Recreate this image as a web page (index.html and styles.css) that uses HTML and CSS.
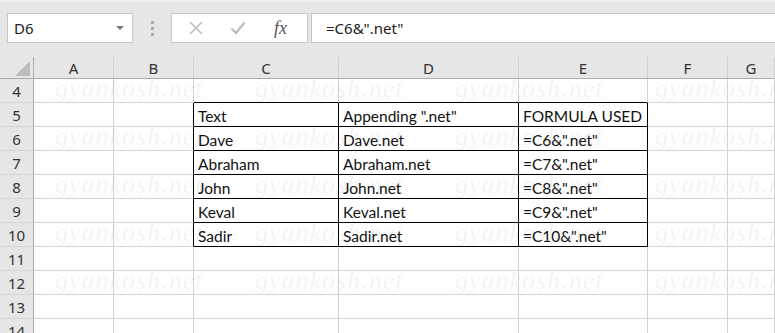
FILE: index.html
```html
<!DOCTYPE html>
<html lang="en">
<head>
  <meta charset="UTF-8">
  <title>Appending text with &amp;</title>
  <link rel="stylesheet" href="styles.css">
</head>
<body>
  <div class="bar">
    <div class="namebox">
      <span>D6</span>
      <span class="drop"></span>
    </div>
    <div class="grip"><i></i><i></i><i></i></div>
    <div class="iconbox">
      <svg class="ico" width="16" height="16" viewBox="0 0 16 16"><path d="M2 2 L14 14 M14 2 L2 14" stroke="#bdbdbd" stroke-width="1.6" fill="none"/></svg>
      <svg class="ico" width="16" height="16" viewBox="0 0 16 16"><path d="M1.5 8.5 L6 13 L14.5 2.5" stroke="#bdbdbd" stroke-width="2.2" fill="none"/></svg>
      <span class="fx">fx</span>
    </div>
    <div class="formula">=C6&amp;".net"</div>
  </div>

  <div class="wrap">
    <div class="sheet">
      <div class="hd corner"><span class="tri"></span></div>
      <div class="hd">A</div><div class="hd">B</div><div class="hd">C</div><div class="hd">D</div><div class="hd">E</div><div class="hd">F</div><div class="hd">G</div>

      <div class="rn">4</div>
      <div class="c"></div><div class="c"></div><div class="c tt"></div><div class="c tt"></div><div class="c tt"></div><div class="c"></div><div class="c"></div>

      <div class="rn">5</div>
      <div class="c"></div><div class="c tl"></div><div class="c t">Text</div><div class="c t">Appending ".net"</div><div class="c t">FORMULA USED</div><div class="c"></div><div class="c"></div>

      <div class="rn">6</div>
      <div class="c"></div><div class="c tl"></div><div class="c t">Dave</div><div class="c t">Dave.net</div><div class="c t">=C6&amp;".net"</div><div class="c"></div><div class="c"></div>

      <div class="rn">7</div>
      <div class="c"></div><div class="c tl"></div><div class="c t">Abraham</div><div class="c t">Abraham.net</div><div class="c t">=C7&amp;".net"</div><div class="c"></div><div class="c"></div>

      <div class="rn">8</div>
      <div class="c"></div><div class="c tl"></div><div class="c t">John</div><div class="c t">John.net</div><div class="c t">=C8&amp;".net"</div><div class="c"></div><div class="c"></div>

      <div class="rn">9</div>
      <div class="c"></div><div class="c tl"></div><div class="c t">Keval</div><div class="c t">Keval.net</div><div class="c t">=C9&amp;".net"</div><div class="c"></div><div class="c"></div>

      <div class="rn">10</div>
      <div class="c"></div><div class="c tl"></div><div class="c t">Sadir</div><div class="c t">Sadir.net</div><div class="c t">=C10&amp;".net"</div><div class="c"></div><div class="c"></div>

      <div class="rn">11</div>
      <div class="c"></div><div class="c"></div><div class="c"></div><div class="c"></div><div class="c"></div><div class="c"></div><div class="c"></div>

      <div class="rn">12</div>
      <div class="c"></div><div class="c"></div><div class="c"></div><div class="c"></div><div class="c"></div><div class="c"></div><div class="c"></div>

      <div class="rn">13</div>
      <div class="c"></div><div class="c"></div><div class="c"></div><div class="c"></div><div class="c"></div><div class="c"></div><div class="c"></div>

      <div class="rn">14</div>
      <div class="c"></div><div class="c"></div><div class="c"></div><div class="c"></div><div class="c"></div><div class="c"></div><div class="c"></div>
    </div>

    <!-- watermark laid over the grid -->
    <div class="marks">
      <span>gyankosh.net</span><span>gyankosh.net</span><span>gyankosh.net</span><span>gyankosh.net</span>
      <span>gyankosh.net</span><span>gyankosh.net</span><span>gyankosh.net</span><span>gyankosh.net</span>
      <span>gyankosh.net</span><span>gyankosh.net</span><span>gyankosh.net</span><span>gyankosh.net</span>
      <span>gyankosh.net</span><span>gyankosh.net</span><span>gyankosh.net</span><span>gyankosh.net</span>
      <span>gyankosh.net</span><span>gyankosh.net</span><span>gyankosh.net</span><span>gyankosh.net</span>
    </div>
  </div>
</body>
</html>
```
FILE: styles.css
```css
body { margin: 0; background: #fff; overflow: hidden; font-family: "Noto Sans", "Open Sans", sans-serif; }

/* formula bar */
.bar {
  height: 57px;
  box-sizing: border-box;
  background: #e6e6e6;
  border-top: 2px solid #f0f0f0;
  padding: 11px 0 0 7px;
  display: flex;
  align-items: flex-start;
}
.namebox {
  width: 126px;
  height: 30px;
  box-sizing: border-box;
  background: #fff;
  border: 1px solid #c6c6c6;
  display: flex;
  align-items: center;
  justify-content: space-between;
  padding: 0 8px 0 6px;
  font-size: 15px;
  color: #222;
}
.drop {
  width: 0; height: 0;
  border-left: 4px solid transparent;
  border-right: 4px solid transparent;
  border-top: 4px solid #777;
}
.grip {
  width: 38px;
  height: 30px;
  display: flex;
  flex-direction: column;
  align-items: center;
  justify-content: center;
  gap: 3px;
}
.grip i { width: 3px; height: 3px; background: #aaa; display: block; }
.iconbox {
  width: 137px;
  height: 30px;
  box-sizing: border-box;
  background: #fff;
  border: 1px solid #c6c6c6;
  display: flex;
  align-items: center;
  padding-left: 16px;
  gap: 26px;
}
.fx { font-family: "Liberation Serif", serif; font-style: italic; font-size: 18px; color: #555; margin-left: 2px; }
.formula {
  flex: 1;
  height: 30px;
  box-sizing: border-box;
  margin-left: 3px;
  background: #fff;
  border: 1px solid #c6c6c6;
  border-right: none;
  display: flex;
  align-items: center;
  padding-left: 14px;
  font-size: 15px;
  color: #222;
}

/* sheet */
.wrap { position: relative; height: 276px; overflow: hidden; }
.sheet {
  display: grid;
  grid-template-columns: 34px 80px 80px 145px 180px 129px 80px 47px;
  grid-template-rows: 22px repeat(11, 24px);
}
.hd {
  background: #e6e6e6;
  border-right: 1px solid #cfcfcf;
  border-bottom: 1px solid #ababab;
  box-sizing: border-box;
  display: flex;
  align-items: center;
  justify-content: center;
  font-size: 15px;
  color: #333;
}
.corner { border-right-color: #ababab; justify-content: flex-end; align-items: flex-end; padding: 0 3px 2px 0; }
.tri { width: 0; height: 0; border-left: 15px solid transparent; border-bottom: 15px solid #bcbcbc; }
.rn {
  background: #e6e6e6;
  border-right: 1px solid #ababab;
  border-bottom: 1px solid #d4d4d4;
  box-sizing: border-box;
  display: flex;
  align-items: center;
  justify-content: center;
  padding-top: 1px;
  font-size: 15px;
  color: #333;
}
.c {
  border-right: 1px solid #d4d4d4;
  border-bottom: 1px solid #d4d4d4;
  box-sizing: border-box;
  display: flex;
  align-items: center;
  padding: 2px 0 0 4px;
  font-family: Lato, "Liberation Sans", sans-serif;
  font-size: 15.5px;
  color: #111;
  white-space: nowrap;
}
.c.t { border-right-color: #000; border-bottom-color: #000; }
.c.tt { border-bottom-color: #000; }
.c.tl { border-right-color: #000; }

/* watermark */
.marks {
  position: absolute;
  left: 55px;
  top: 18px;
  display: grid;
  grid-template-columns: repeat(3, 200px) 120px;
  grid-auto-rows: 48px;
  pointer-events: none;
  overflow: hidden;
  width: 720px;
}
.marks span {
  font-family: "Liberation Serif", serif;
  font-style: italic;
  font-size: 26px;
  letter-spacing: 1px;
  line-height: 28px;
  color: rgba(0, 0, 0, 0.06);
  white-space: nowrap;
  overflow: hidden;
}
```
